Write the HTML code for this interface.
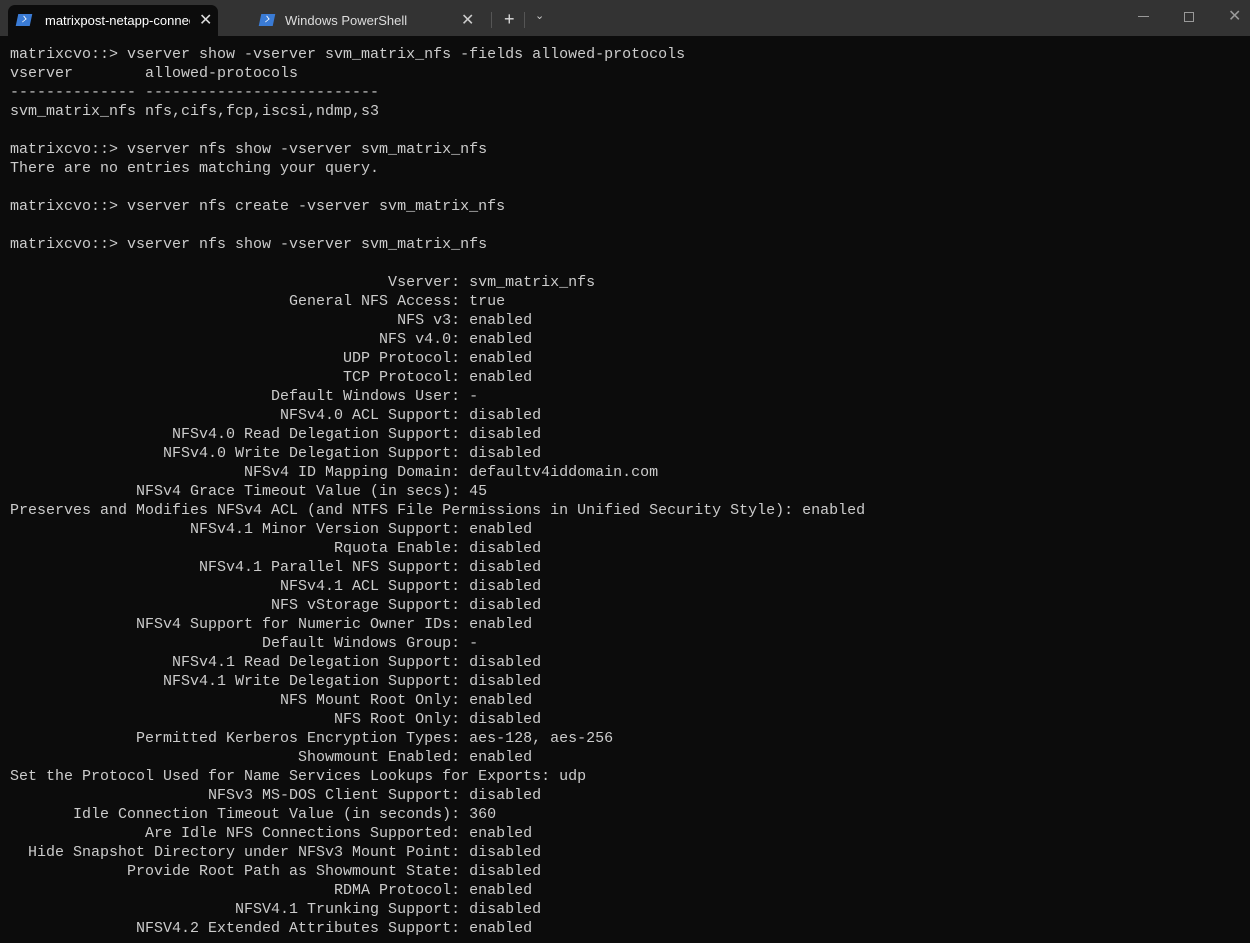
<!DOCTYPE html>
<html><head><style>
body{margin:0;width:1250px;height:943px;background:#0c0c0c;overflow:hidden;font-family:"Liberation Sans",sans-serif}
.bar{position:absolute;left:0;top:0;width:1250px;height:36px;background:#333}
.tab{position:absolute;top:5px;height:31px;font-size:13px;color:#fff;line-height:31px}
.t1{left:8px;width:210px;background:#0c0c0c;border-radius:7px 7px 0 0}
.ico{position:absolute;left:9px;top:9px;width:14px;height:12px;background:#3a7bd5;transform:skewX(-12deg)}
.ico:after{content:"";position:absolute;left:3px;top:2px;width:5px;height:5px;border-right:1.5px solid #fff;border-bottom:1.5px solid #fff;transform:rotate(-45deg) scale(.8)}
pre{position:absolute;left:10px;top:45px;margin:0;font-family:"Liberation Mono",monospace;font-size:15px;line-height:19px;color:#cccccc}
.g{position:absolute;color:#aaa;font-size:16px}
</style></head><body>
<div class="bar"></div>
<div class="tab t1"><div class="ico"></div><span style="position:absolute;left:37px;width:145px;overflow:hidden;white-space:nowrap">matrixpost-netapp-connector</span><span style="position:absolute;left:191px;font-size:16px;color:#ddd">✕</span></div>
<div class="tab" style="left:250px;width:230px"><div class="ico" style="left:10px"></div><span style="position:absolute;left:35px;color:#ddd">Windows PowerShell</span><span style="position:absolute;left:211px;font-size:16px;color:#ccc">✕</span></div>
<div style="position:absolute;left:491px;top:12px;width:1px;height:16px;background:#555"></div>
<div class="g" style="left:504px;top:9px;color:#ddd;font-size:18px">+</div>
<div style="position:absolute;left:524px;top:12px;width:1px;height:16px;background:#555"></div>
<div class="g" style="left:535px;top:9px;font-size:11px;color:#ccc">&#8964;</div>
<div style="position:absolute;left:1138px;top:16px;width:11px;height:1px;background:#999"></div>
<div style="position:absolute;left:1184px;top:12px;width:8px;height:8px;border:1px solid #999"></div>
<div class="g" style="left:1228px;top:6px;color:#999">✕</div>
<pre>matrixcvo::> vserver show -vserver svm_matrix_nfs -fields allowed-protocols
vserver        allowed-protocols
-------------- --------------------------
svm_matrix_nfs nfs,cifs,fcp,iscsi,ndmp,s3

matrixcvo::> vserver nfs show -vserver svm_matrix_nfs
There are no entries matching your query.

matrixcvo::> vserver nfs create -vserver svm_matrix_nfs

matrixcvo::> vserver nfs show -vserver svm_matrix_nfs

                                          Vserver: svm_matrix_nfs
                               General NFS Access: true
                                           NFS v3: enabled
                                         NFS v4.0: enabled
                                     UDP Protocol: enabled
                                     TCP Protocol: enabled
                             Default Windows User: -
                              NFSv4.0 ACL Support: disabled
                  NFSv4.0 Read Delegation Support: disabled
                 NFSv4.0 Write Delegation Support: disabled
                          NFSv4 ID Mapping Domain: defaultv4iddomain.com
              NFSv4 Grace Timeout Value (in secs): 45
Preserves and Modifies NFSv4 ACL (and NTFS File Permissions in Unified Security Style): enabled
                    NFSv4.1 Minor Version Support: enabled
                                    Rquota Enable: disabled
                     NFSv4.1 Parallel NFS Support: disabled
                              NFSv4.1 ACL Support: disabled
                             NFS vStorage Support: disabled
              NFSv4 Support for Numeric Owner IDs: enabled
                            Default Windows Group: -
                  NFSv4.1 Read Delegation Support: disabled
                 NFSv4.1 Write Delegation Support: disabled
                              NFS Mount Root Only: enabled
                                    NFS Root Only: disabled
              Permitted Kerberos Encryption Types: aes-128, aes-256
                                Showmount Enabled: enabled
Set the Protocol Used for Name Services Lookups for Exports: udp
                      NFSv3 MS-DOS Client Support: disabled
       Idle Connection Timeout Value (in seconds): 360
               Are Idle NFS Connections Supported: enabled
  Hide Snapshot Directory under NFSv3 Mount Point: disabled
             Provide Root Path as Showmount State: disabled
                                    RDMA Protocol: enabled
                         NFSV4.1 Trunking Support: disabled
              NFSV4.2 Extended Attributes Support: enabled</pre>
</body></html>
